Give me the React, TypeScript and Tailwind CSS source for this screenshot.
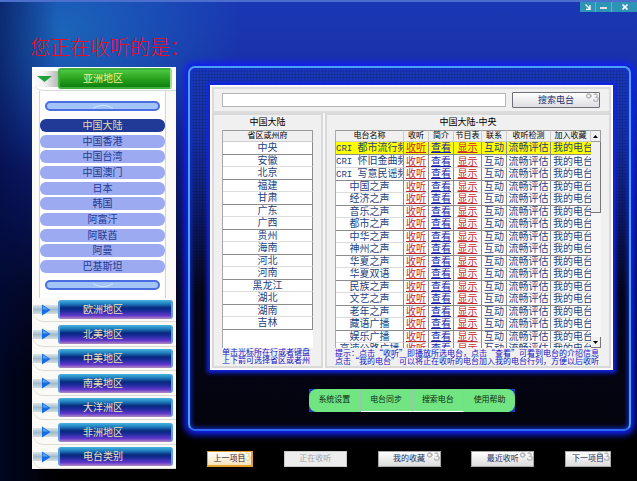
import { useState } from 'react'
import clsx from 'clsx'

const countries = ['中国大陆', '中国香港', '中国台湾', '中国澳门', '日本', '韩国', '阿富汗', '阿联酋', '阿曼', '巴基斯坦']

const regions = ['欧洲地区', '北美地区', '中美地区', '南美地区', '大洋洲区', '非洲地区', '电台类别']

const provinces = [
  '中央', '安徽', '北京', '福建', '甘肃', '广东', '广西', '贵州', '海南', '河北', '河南', '黑龙江', '湖北', '湖南', '吉林'
]

const stations = [
  { prefix: 'CRI ', name: '都市流行频' },
  { prefix: 'CRI ', name: '怀旧金曲频' },
  { prefix: 'CRI ', name: '写意民谣频' },
  { name: '中国之声' },
  { name: '经济之声' },
  { name: '音乐之声' },
  { name: '都市之声' },
  { name: '中华之声' },
  { name: '神州之声' },
  { name: '华夏之声' },
  { name: '华夏双语' },
  { name: '民族之声' },
  { name: '文艺之声' },
  { name: '老年之声' },
  { name: '藏语广播' },
  { name: '娱乐广播' },
  { name: '高速公路广播' }
]

const menu = ['系统设置', '电台同步', '搜索电台', '使用帮助']

function Swirl({ color = '#b4b4b8' }: { color?: string }) {
  return (
    <svg viewBox="0 0 14 11" className="absolute top-0 right-0 w-[14px] h-[11px]" fill="none" stroke={color} strokeWidth="1.3">
      <circle cx="3.5" cy="3" r="2" />
      <path d="M6 1.500V4M8.500 1.500c3-1.500 5 1 2.500 2.700 3.500.3 2.500 4.300-.3 4.200-1.700 0-2.400-1.200-2-2.200" />
    </svg>
  )
}

function RegionRow({ label }: { label: string }) {
  return (
    <div className="flex items-center h-6 pr-[3px] rounded-bl-[12px] border-b border-[#dedbd2]">
      <span className="w-[25px] h-[9px] ml-px flex items-center justify-center bg-gradient-to-b from-[#dce6ea] via-[#9fbccb] to-[#d3dde2] shrink-0">
        <svg viewBox="0 0 10 12" className="w-[10px] h-3 shrink-0">
          <path d="M1 0.500L9.500 6L1 11.500Z" fill="#176be0" />
          <path d="M1.800 2L7.500 5.600H1.800Z" fill="#5aa5f5" />
        </svg>
      </span>
      <button className="flex-1 h-[19px] pl-[23px] text-left text-[10px] leading-[19px] text-[#efe3bb] rounded-[3px] border-x-2 border-x-[#5a9fd8] bg-[linear-gradient(to_bottom,#48b4de_0%,#2285c2_18%,#06287e_42%,#1c2c9c_58%,#6138cc_82%,#b58bc0_100%)]">
        {label}
      </button>
    </div>
  )
}

function Scroller({ up }: { up?: boolean }) {
  return (
    <button aria-label={up ? '▲' : '▼'} className="block h-[10px] mx-[5px] rounded-full border-2 border-[#4a6ee0] bg-[#a3c4f8]">
      <svg viewBox="0 0 24 5" className="w-6 h-[5px] mx-auto" fill="none" stroke="#d5e5ff">
        <path d={up ? 'M2 4.500Q12 -2 22 4.500' : 'M2 0.500Q12 7 22 0.500'} />
      </svg>
    </button>
  )
}

function Sidebar() {
  const [selected, setSelected] = useState(countries[0])

  return (
    <nav className="w-36 shrink-0 bg-[#fbfaf7]">
      <div className="flex items-center h-6 pr-1 bg-white rounded-bl-[12px] border-b border-[#d8d8d8]">
        <span className="w-[26px] h-4 flex items-center justify-center bg-gradient-to-r from-white via-[#f0f0f0] to-[#b9b9b9]">
          <svg viewBox="0 0 16 8" className="w-4 h-2">
            <path d="M0 1H15L7.500 7Z" fill="#20a038" />
          </svg>
        </span>
        <button className="flex-1 h-[21px] pl-[23px] text-left text-[10px] leading-[17px] text-[#e8f49a] rounded-[3px] border-2 border-[#3faf3f] border-r-[#9be08e] bg-gradient-to-b from-[#4cc840] via-[#2aa41e] to-[#0d7f10]">
          亚洲地区
        </button>
      </div>
      <div className="flex flex-col mx-[7px] mr-[10px] pt-[10px] pb-2 border-x border-[#d5d5d5] bg-white">
        <Scroller up />
        <ul className="flex flex-col justify-between h-[154px] mt-2 mb-[7px]">
          {countries.map((country) => (
            <li key={country}>
              <button
                onClick={() => setSelected(country)}
                className={clsx(
                  'block w-full h-[13px] rounded-[6px] text-[10px] leading-[13px]',
                  country === selected ? 'bg-[#213a97] text-[#e3dcae]' : 'bg-[#9baaf1] text-[#1f3a91]'
                )}
              >
                {country}
              </button>
            </li>
          ))}
        </ul>
        <Scroller />
      </div>
      <div className="flex flex-col justify-between h-[171px]">
        {regions.map((region) => (
          <RegionRow key={region} label={region} />
        ))}
      </div>
    </nav>
  )
}

function ProvincePanel() {
  return (
    <section className="w-[111px] shrink-0 px-2 border-2 border-[#d9d9d9] bg-[#f0f0f0]">
      <h2 className="h-[15px] text-center text-[9px] leading-[15px] text-black">中国大陆</h2>
      <div className="h-[218px] bg-white border-l border-[#aaa]">
        <table className="w-full table-fixed border-separate border-spacing-0">
          <thead>
            <tr>
              <th className="p-0 text-[8px] leading-[10px] font-normal text-black bg-[#f0f0f0] border-y border-r border-[#999] border-b-[#ccc]">省区或州府</th>
            </tr>
          </thead>
          <tbody>
            {provinces.map((province) => (
              <tr key={province} className="group">
                <td className="p-0 text-center text-[10px] leading-[12px] group-even:leading-[11px] text-[#1d3f7e] border-b border-r border-[#8c8c8c] group-even:border-b-[#dcdcdc]">
                  {province}
                </td>
              </tr>
            ))}
          </tbody>
        </table>
      </div>
      <p className="text-[8px] leading-[8px] pt-px pb-px text-[#1410c4] whitespace-nowrap">
        单击光标所在行或者键盘
        <br />
        上下箭可选择省区或者州
      </p>
    </section>
  )
}

function StationPanel() {
  const th = 'p-0 text-[8px] leading-[10px] font-normal text-black bg-[#f0f0f0] border-y border-r border-[#999] border-b-[#ccc] border-r-[#ccc] whitespace-nowrap'
  const td = 'p-0 text-[10px] leading-[12px] group-even:leading-[11px] border-b border-r border-[#8c8c8c] group-even:border-b-[#dcdcdc] whitespace-nowrap overflow-hidden'

  return (
    <section className="flex-1 min-w-0 px-2 border-2 border-[#d9d9d9] bg-[#f0f0f0]">
      <h2 className="h-[15px] text-center text-[9px] leading-[15px] text-black">中国大陆-中央</h2>
      <div className="flex h-[218px] overflow-hidden bg-white border-l border-[#aaa]">
        <div className="flex-1 min-w-0 overflow-hidden">
          <table className="w-full table-fixed border-separate border-spacing-0">
            <colgroup>
              <col />
              <col className="w-[25px]" />
              <col className="w-[25px]" />
              <col className="w-[28px]" />
              <col className="w-[25px]" />
              <col className="w-[44px]" />
              <col className="w-[40px]" />
            </colgroup>
            <thead>
              <tr>
                <th className={th}>电台名称</th>
                <th className={th}>收听</th>
                <th className={th}>简介</th>
                <th className={th}>节目表</th>
                <th className={th}>联系</th>
                <th className={th}>收听检测</th>
                <th className={th}>加入收藏</th>
              </tr>
            </thead>
            <tbody>
              {stations.map((station, index) => (
                <tr key={index} className={clsx('group text-[#1d3f7e]', index === 0 && 'bg-[#ffff00]')}>
                  <td className={clsx(td, station.prefix ? 'text-left' : 'text-center')}>
                    {station.prefix && <span className="font-['Liberation_Mono'] text-[9px] leading-none whitespace-pre">{station.prefix}</span>}
                    {station.name}
                  </td>
                  <td className={clsx(td, 'text-center')}><a href="#listen" className="underline text-[#c8252c]">收听</a></td>
                  <td className={clsx(td, 'text-center')}><a href="#intro" className="underline text-[#1818a8]">查看</a></td>
                  <td className={clsx(td, 'text-center')}><a href="#schedule" className="underline text-[#c8252c]">显示</a></td>
                  <td className={clsx(td, 'text-center')}>互动</td>
                  <td className={clsx(td, 'text-center')}>流畅评估</td>
                  <td className="p-0 pl-[2px] text-left text-[10px] leading-[12px] group-even:leading-[11px] border-b border-[#8c8c8c] group-even:border-b-[#dcdcdc] whitespace-nowrap overflow-hidden">
                    我的电台
                  </td>
                </tr>
              ))}
            </tbody>
          </table>
        </div>
        {/* Scrollbar */}
        <div className="w-[10px] shrink-0 flex flex-col bg-[#f7f7f7]">
          <button aria-label="▲" className="h-3 flex items-center justify-center bg-[#f0f0f0] border-t border-r border-[#999] border-b">
            <svg viewBox="0 0 5 3" className="w-[5px] h-[3px]"><path d="M0 3L2.500 0L5 3Z" fill="#000" /></svg>
          </button>
          <div className="h-[71px] bg-[#f0f0f0] border-r border-b border-[#777]" />
          <button aria-label="▼" className="h-[11px] mt-auto flex items-center justify-center bg-[#f0f0f0] border-r border-b border-[#777]">
            <svg viewBox="0 0 5 3" className="w-[5px] h-[3px]"><path d="M0 0L2.500 3L5 0Z" fill="#000" /></svg>
          </button>
        </div>
      </div>
      <p className="font-['Noto_Sans_CJK_SC',sans-serif] text-[8px] leading-[8px] pt-px pb-px text-[#1410c4] whitespace-nowrap">
        提示：点击“收听”即播放所选电台，点击“查看”可看到电台的介绍信息
        <br />
        点击“我的电台”可以将正在收听的电台加入我的电台行列，方便以后收听
      </p>
    </section>
  )
}

function FooterButton({ label, wide, active, disabled }: { label: string; wide?: boolean; active?: boolean; disabled?: boolean }) {
  return (
    <button
      disabled={disabled}
      className={clsx(
        'relative h-4 text-[8px] leading-[14px]',
        wide ? 'w-[63px]' : 'w-[46px]',
        active && 'border border-[#e5a02c] border-b-2 border-r-2 bg-gradient-to-b from-white to-[#f8e4bd] text-[#1d2440]',
        disabled && 'border border-[#c9c9c9] bg-[#ededed] text-[#a5a5a5]',
        !active && !disabled && 'border border-[#a8a8a8] bg-gradient-to-b from-white to-[#dcdcdc] text-[#28305a]'
      )}
    >
      {!disabled && <Swirl color={active ? '#f6d596' : '#b4b4b8'} />}
      <span className="relative">{label}</span>
    </button>
  )
}

export default function App() {
  return (
    <div className="min-h-screen flex flex-col overflow-hidden font-['Liberation_Sans','Noto_Sans_CJK_SC',sans-serif] border-t-2 border-[#4c6fce] bg-black bg-[linear-gradient(to_right,#000a3c90_0%,transparent_9%),radial-gradient(ellipse_at_10%_6%,#1b74bcc0_0%,transparent_22%),linear-gradient(to_bottom,#1a38b4_0%,#1932a8_14%,#122488_26%,#0a155c_42%,#040824_60%,#000_78%)]">
      {/* Window controls */}
      <header className="flex justify-end h-[10px]">
        <div className="flex h-[10px] bg-[#2d94b5] text-white">
          <button aria-label="↘" className="w-4 flex items-center justify-center border-r border-[#5cb6cf]">
            <svg viewBox="0 0 6 6" className="w-[6px] h-[6px]" fill="none" stroke="#fff" strokeWidth="1.3"><path d="M0.500 0.500L5 5M5 1V5.300H1" /></svg>
          </button>
          <button aria-label="–" className="w-4 flex items-end justify-center pb-[3px] border-r border-[#5cb6cf]">
            <span className="w-[7px] h-[2px] bg-[#e7dede]" />
          </button>
          <button aria-label="×" className="w-[25px] flex items-center justify-center">
            <svg viewBox="0 0 6 6" className="w-[6px] h-[6px]" stroke="#fff" strokeWidth="1.600"><path d="M0.500 0.500L5.500 5.500M5.500 0.500L0.500 5.500" /></svg>
          </button>
        </div>
      </header>

      <h1 className="mt-[22px] ml-[30px] text-[20px] leading-[28px] font-light text-[#e8101e]">您正在收听的是：</h1>

      <div className="flex items-start pl-8 pr-[6px] mt-[5px] gap-3">
        <Sidebar />

        <div className="flex-1 min-w-0 -mt-px">
          <main className="rounded-[7px] border-2 border-[#4aa0f5] border-b-[#2d6cf0] shadow-[0_0_6px_4px_#1220f0,inset_0_0_5px_1px_#1530d8] pt-[17px] pl-5 pr-4 pb-[17px] bg-[repeating-linear-gradient(to_right,#00000020_0_1px,transparent_1px_3px),repeating-linear-gradient(to_bottom,#00000020_0_1px,transparent_1px_3px),linear-gradient(to_bottom,#1a3ab8_0%,#1630a4_20%,#0b1860_42%,#04061c_62%,#04040e_100%)]">
            <div className="p-px border border-white bg-[#f7f7f7] shadow-[0_0_4px_3px_#1224e8]">
              <form className="flex items-center gap-[6px] h-[26px] pl-2 pr-[9px] border-2 border-[#dcdcdc] bg-[#f0f0f0]" onSubmit={(e) => e.preventDefault()}>
                <input type="text" aria-labelledby="search" className="flex-1 min-w-0 h-[14px] px-1 text-[10px] bg-white border border-[#b5b5b5] outline-none" />
                <button id="search" className="relative w-[88px] h-4 text-[9px] leading-[14px] text-[#2d2d66] rounded-[1px] border border-[#6f6f78] bg-gradient-to-b from-white to-[#dedee2]">
                  <Swirl />
                  搜索电台
                </button>
              </form>
              <div className="flex gap-[2px]">
                <ProvincePanel />
                <StationPanel />
              </div>
            </div>

            <div className="flex w-[206px] h-[23px] mt-[19px] ml-[99px] bg-[#1b3cb4]">
              {menu.map((item, index) => (
                <button
                  key={item}
                  className={clsx(
                    'flex-1 text-[8px] leading-[22px] text-[#0c2a12] bg-[#72e583] border-b',
                    index === 0 && 'rounded-l-[8px]',
                    index === 3 && 'rounded-r-[8px]',
                    index > 0 && index < 3 ? 'border-b-white' : 'border-b-[#72e583]',
                    index < 3 && 'border-r border-r-[#9cc3ac]'
                  )}
                >
                  {item}
                </button>
              ))}
            </div>
          </main>

          <footer className="flex justify-between mt-5 pl-[19px] pr-5">
            <FooterButton label="上一项目" active />
            <FooterButton label="正在收听" wide disabled />
            <FooterButton label="我的收藏" wide />
            <FooterButton label="最近收听" wide />
            <FooterButton label="下一项目" />
          </footer>
        </div>
      </div>
    </div>
  )
}
